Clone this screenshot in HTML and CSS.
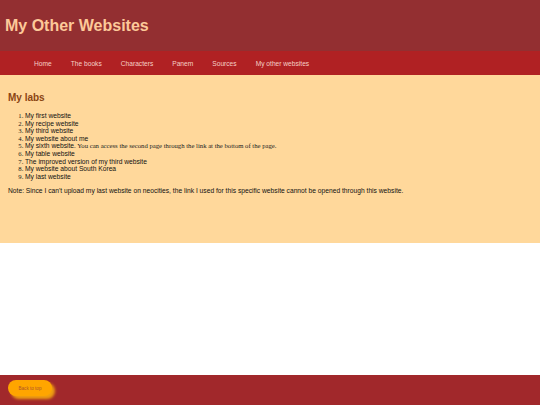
FILE: index.html
```html
<!DOCTYPE html>
<html lang="en">
<head>
  <meta charset="UTF-8">
  <meta name="viewport" content="width=device-width, initial-scale=1.0">
  <title>My Other Websites</title>
  <link rel="stylesheet" href="styles.css">
</head>
<body>

  <!-- Header -->
  <header class="top">
    <h1>My Other Websites</h1>
  </header>

  <nav class="menu">
    <a href="#">Home</a>
    <a href="#">The books</a>
    <a href="#">Characters</a>
    <a href="#">Panem</a>
    <a href="#">Sources</a>
    <a href="#">My other websites</a>
  </nav>

  <!-- Labs list -->
  <main class="labs">
    <h2>My labs</h2>
    <ol>
      <li><a href="#">My first website</a></li>
      <li><a href="#">My recipe website</a></li>
      <li><a href="#">My third website</a></li>
      <li><a href="#">My website about me</a></li>
      <li><a href="#">My sixth website</a>. You can access the second page through the link at the bottom of the page.</li>
      <li><a href="#">My table website</a></li>
      <li><a href="#">The improved version of my third website</a></li>
      <li><a href="#">My website about South Korea</a></li>
      <li><a href="#">My last website</a></li>
    </ol>
    <p class="note">Note: Since I can't upload my last website on neocities, the link I used for this specific website cannot be opened through this website.</p>
  </main>

  <footer class="bottom">
    <button class="top-btn" onclick="window.scrollTo(0, 0)">Back to top</button>
  </footer>

</body>
</html>
```

FILE: styles.css
```css
* {
  margin: 0;
  padding: 0;
  box-sizing: border-box;
}

body {
  font-family: 'Liberation Sans', Arial, sans-serif;
  display: flex;
  flex-direction: column;
  min-height: 100vh;
  background-color: #fff;
}

.top {
  height: 51px;
  display: flex;
  align-items: center;
  padding-left: 5px;
  background-color: #932f31;
}

.top h1 {
  font-size: 16px;
  font-weight: bold;
  color: #fdc999;
}

.menu {
  height: 24px;
  display: flex;
  align-items: center;
  gap: 19px;
  padding-left: 34px;
  background-color: #b02123;
}

.menu a {
  font-size: 6.65px;
  color: #f6d0c6;
  text-decoration: none;
}

.labs {
  height: 168px;
  padding: 17px 8px 0;
  background-color: #ffd89b;
}

.labs h2 {
  font-size: 10px;
  font-weight: bold;
  color: #8b4513;
  margin-bottom: 9px;
}

.labs ol {
  font-family: 'Liberation Serif', 'Times New Roman', serif;
  font-size: 6.7px;
  line-height: 7.6px;
  color: #222;
  padding-left: 17px;
}

.labs ol a {
  font-family: 'Liberation Sans', Arial, sans-serif;
  color: #111;
  text-decoration: none;
}

.note {
  font-size: 6.7px;
  color: #111;
  margin-top: 7px;
}

.bottom {
  margin-top: auto;
  height: 30px;
  display: flex;
  align-items: center;
  padding: 0 0 4px 8px;
  background-color: #a1282b;
}

.top-btn {
  width: 44px;
  height: 16px;
  border: none;
  border-radius: 8px;
  background-color: #ffa500;
  color: #b0562a;
  font-family: 'Liberation Sans', Arial, sans-serif;
  font-size: 4.6px;
  box-shadow: 3px 3px 3px #f0a010;
  cursor: pointer;
}
```
